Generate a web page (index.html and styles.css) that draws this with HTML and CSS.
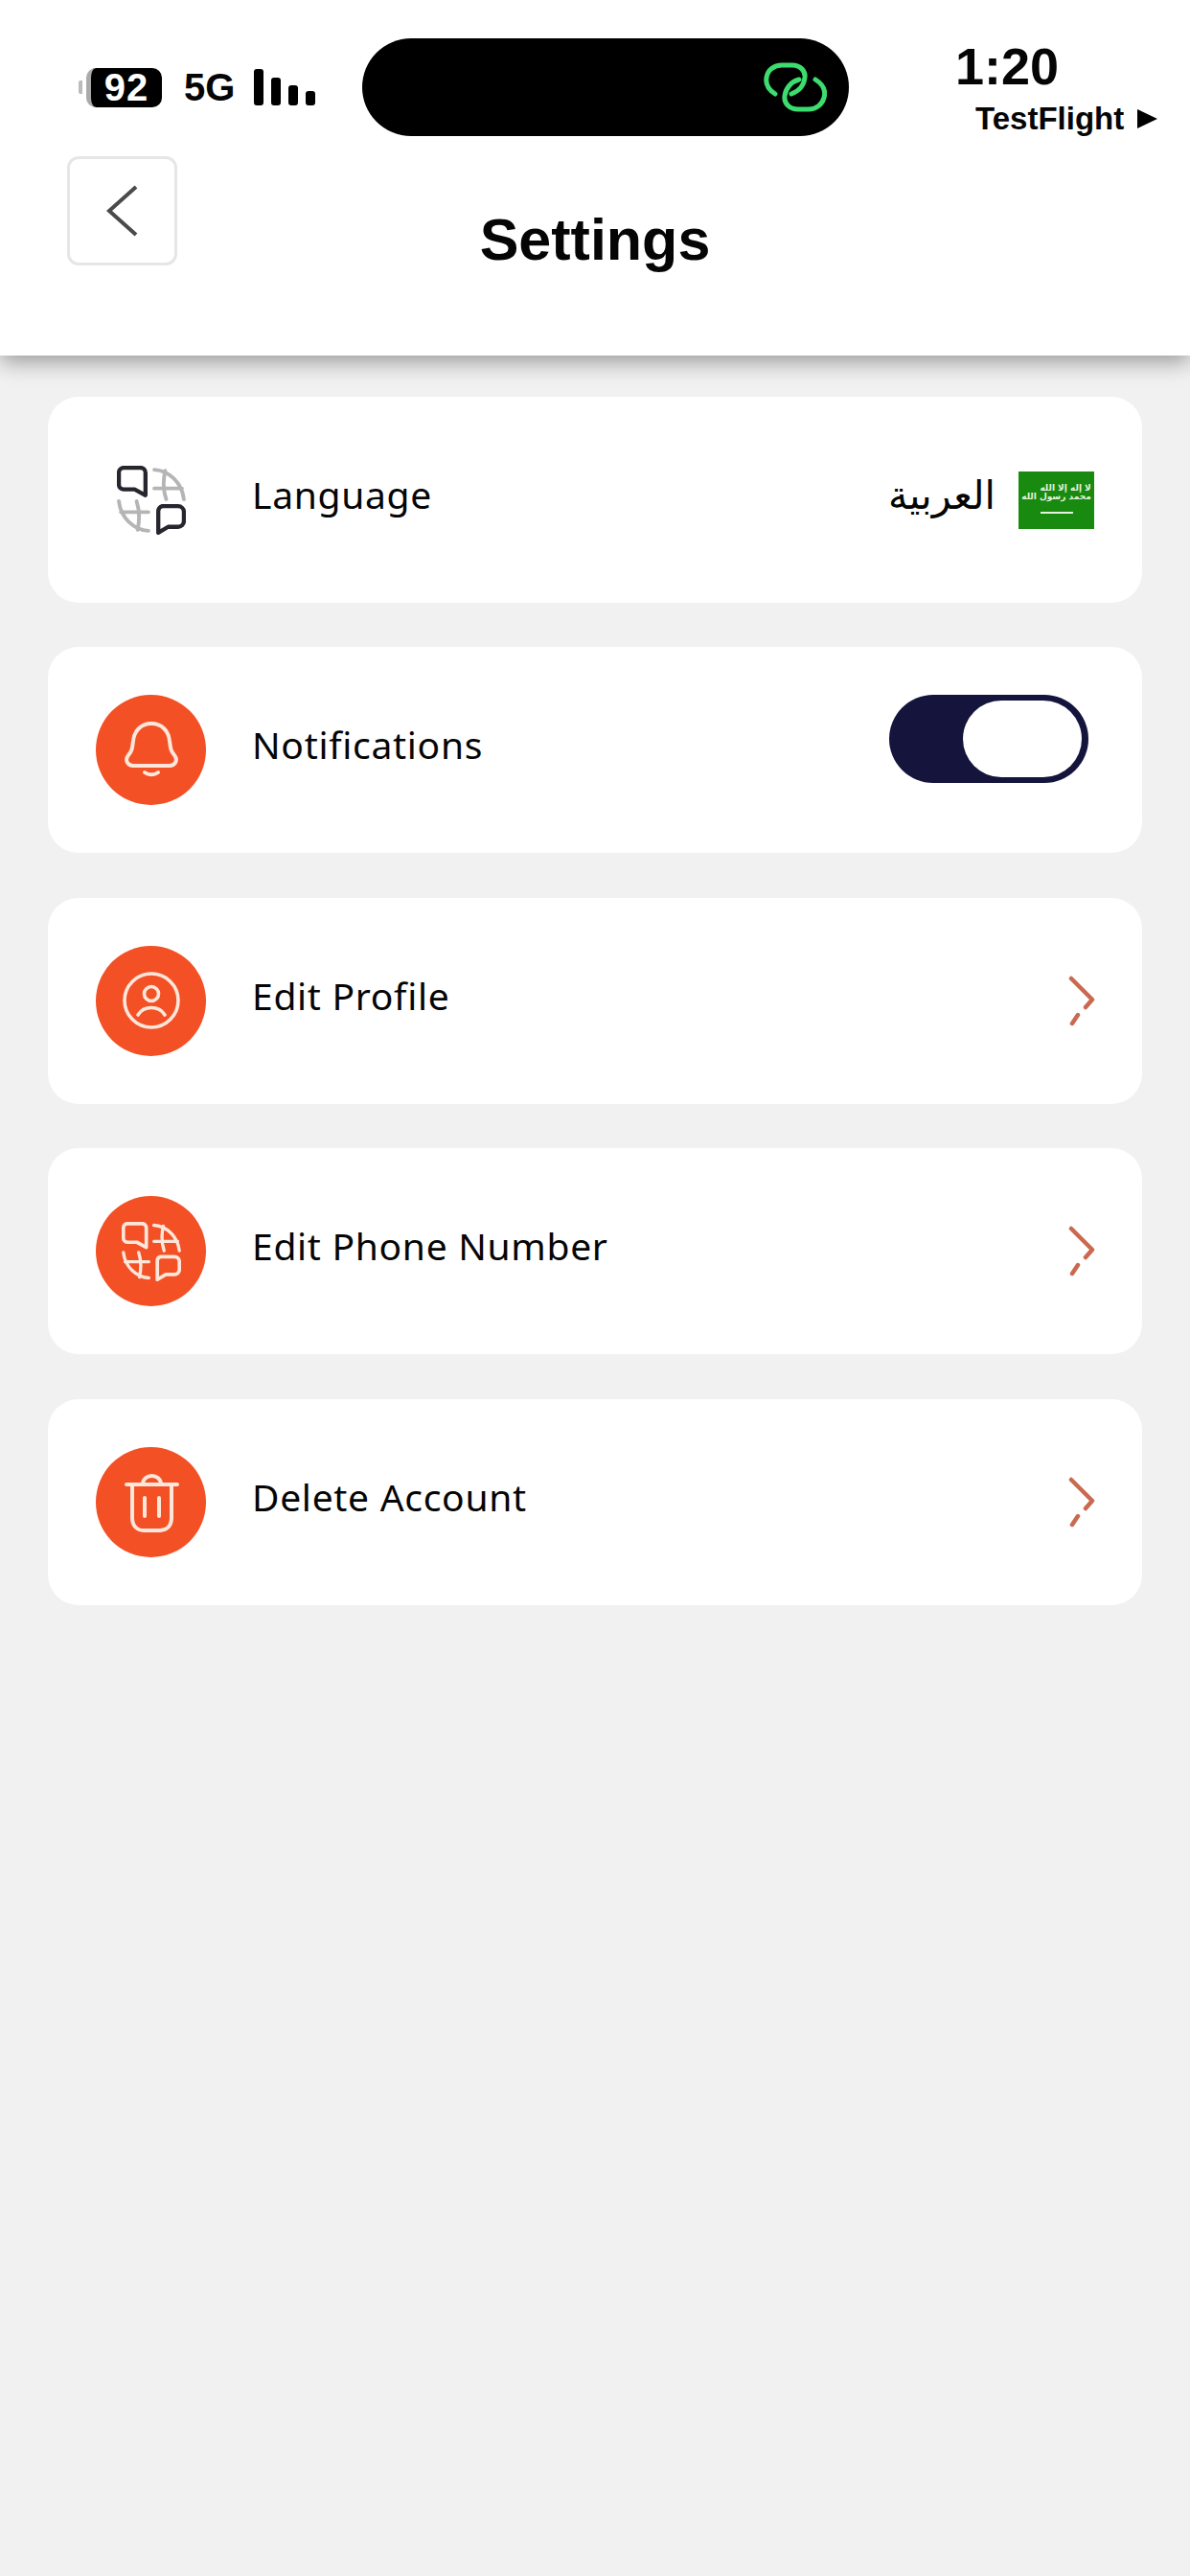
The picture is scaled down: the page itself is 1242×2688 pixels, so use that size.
FILE: index.html
```html
<!DOCTYPE html>
<html lang="en">
	<head>
		<meta charset="utf-8" />
		<title>Settings</title>
		<link rel="stylesheet" href="styles.css">
	</head>
	<body>
		<svg class="settings__defs" width="0" height="0">
			<symbol id="lang-icon" viewBox="0 0 70 70">
				<!-- globe quarters -->
				<g class="globe" fill="none" stroke-width="3.8" stroke-linecap="round">
					<path d="M38 4C53 5 66 17 68 34M38 23H66M49 5C47 14 47 25 50 34" />
					<path d="M32 66C17 65 4 53 2 36M32 47H4M21 65C23 56 23 45 20 36" />
				</g>
				<!-- speech bubbles -->
				<g class="bubbles" fill="none" stroke-width="4.2" stroke-linejoin="round">
					<path d="M7 2H24a5 5 0 0 1 5 5V30L18 24H7a5 5 0 0 1-5-5V7a5 5 0 0 1 5-5z" />
					<path d="M46 41H62a6 6 0 0 1 6 6V56a6 6 0 0 1-6 6H52L42 68V46a5 5 0 0 1 4-5z" />
				</g>
			</symbol>
			<symbol id="chevron" viewBox="0 0 30 56">
				<path d="M3 3L25 25L18 33M10 41L4 50" fill="none" stroke="#c96a50" stroke-width="4.5" stroke-linecap="round" stroke-linejoin="round" />
			</symbol>
		</svg>

		<div class="settings">
			<header class="settings__header">
				<div class="status">
					<div class="status__left">
						<span class="status__nub"></span>
						<span class="status__battery">92</span>
						<span class="status__net">5G</span>
						<span class="status__bars">
							<i class="bar-1"></i><i class="bar-2"></i><i class="bar-3"></i><i class="bar-4"></i>
						</span>
					</div>
					<div class="status__island">
						<svg width="66" height="52" viewBox="0 0 66 52" fill="none" stroke="#3ddc6e" stroke-width="5" stroke-linecap="round">
							<path d="M12 33C4 28 2 22 3 16C4 8 11 3 19 3H30C38 3 44 9 43 16C42 24 37 30 29 33" />
							<path d="M54 18C62 23 65 30 63 37C61 44 55 49 47 49H36C27 49 21 43 22 35C23 27 29 20 37 18" />
						</svg>
					</div>
					<div class="status__right">
						<span class="status__time">1:20</span>
						<span class="status__back">TestFlight <i class="status__play"></i></span>
					</div>
				</div>
				<div class="nav">
					<button class="nav__back">
						<svg width="34" height="54" viewBox="0 0 34 54" fill="none" stroke="#4a4a4a" stroke-width="4">
							<path d="M31 2L3 27L31 52" />
						</svg>
					</button>
					<h1 class="nav__title">Settings</h1>
				</div>
			</header>

			<main class="settings__list">
				<div class="row">
					<span class="row__icon row__icon--plain">
						<svg width="72" height="72"><use href="#lang-icon" /></svg>
					</span>
					<span class="row__label">Language</span>
					<span class="row__value" lang="ar" dir="rtl">العربية</span>
					<span class="flag">
						<span class="flag__script" lang="ar" dir="rtl">لا إله إلا الله<br>محمد رسول الله</span>
						<span class="flag__sword"></span>
					</span>
				</div>

				<div class="row">
					<span class="row__icon">
						<svg width="66" height="66" viewBox="0 0 66 66" fill="none" stroke="#fde6da" stroke-width="4" stroke-linecap="round" stroke-linejoin="round">
							<path d="M33 5C22 5 15 13 14 23C13 31 13 33 9 38C5 43 8 49 14 49H52C58 49 61 43 57 38C53 33 53 31 52 23C51 13 44 5 33 5z" />
							<path d="M26 56C30 59 36 59 40 56" />
						</svg>
					</span>
					<span class="row__label">Notifications</span>
					<span class="toggle"><span class="toggle__knob"></span></span>
				</div>

				<div class="row">
					<span class="row__icon">
						<svg width="66" height="66" viewBox="0 0 66 66" fill="none" stroke="#fde6da" stroke-width="3.6" stroke-linecap="round">
							<circle cx="33" cy="33" r="28" />
							<circle cx="33" cy="26" r="7.5" />
							<path d="M19 48C25 38 41 38 47 48" />
						</svg>
					</span>
					<span class="row__label">Edit Profile</span>
					<svg class="row__chevron" width="30" height="56"><use href="#chevron" /></svg>
				</div>

				<div class="row">
					<span class="row__icon row__icon--light">
						<svg width="62" height="62"><use href="#lang-icon" /></svg>
					</span>
					<span class="row__label">Edit Phone Number</span>
					<svg class="row__chevron" width="30" height="56"><use href="#chevron" /></svg>
				</div>

				<div class="row">
					<span class="row__icon">
						<svg width="66" height="66" viewBox="0 0 66 66" fill="none" stroke="#fde6da" stroke-width="4" stroke-linecap="round" stroke-linejoin="round">
							<path d="M7 15H60" />
							<path d="M24 15C24 3 43 3 43 15" />
							<path d="M13 15V50C13 58 18 63 25 63H42C49 63 54 58 54 50V15" />
							<path d="M26 29V48M41 29V48" />
						</svg>
					</span>
					<span class="row__label">Delete Account</span>
					<svg class="row__chevron" width="30" height="56"><use href="#chevron" /></svg>
				</div>
			</main>
		</div>
	</body>
</html>
```

FILE: styles.css
```css
* {
	box-sizing: border-box;
}

body {
	margin: 0;
	background: #f1f1f1;
	font-family: "Liberation Sans", sans-serif;
	color: #050505;
}

.settings {
	width: 1242px;
	height: 2688px;
	overflow: hidden;
}

.settings__defs {
	display: block;
	height: 0;
}

.settings__header {
	height: 371px;
	background: #fff;
	box-shadow: 0 6px 22px rgba(0, 0, 0, 0.38);
	padding-top: 40px;
}

.settings__list {
	display: flex;
	flex-direction: column;
	gap: 46.4px;
	padding: 43px 50px 0;
}

/* status bar */
.status {
	display: flex;
	align-items: center;
	height: 102px;
	padding-left: 82px;
}

.status__left {
	display: flex;
	align-items: center;
	width: 296px;
}

.status__nub {
	width: 4px;
	height: 14px;
	margin-right: 4px;
	background: #bbb;
	border-radius: 2px 0 0 2px;
}

.status__battery {
	width: 79px;
	height: 41px;
	line-height: 41px;
	text-align: center;
	background: #000;
	border-left: 5px solid #aaa;
	border-radius: 10px;
	color: #fff;
	font-size: 40px;
	font-weight: 700;
	letter-spacing: 1px;
}

.status__net {
	margin-left: 23px;
	font-size: 40px;
	font-weight: 700;
}

.status__bars {
	display: flex;
	align-items: flex-end;
	gap: 8px;
	height: 38px;
	margin-left: 20px;
}

.status__bars i {
	width: 10px;
	background: #000;
	border-radius: 3px;
}

.bar-1 {
	height: 38px;
}
.bar-2 {
	height: 29px;
}
.bar-3 {
	height: 21px;
}
.bar-4 {
	height: 15px;
}

.status__island {
	display: flex;
	align-items: center;
	justify-content: flex-end;
	width: 508px;
	height: 102px;
	padding-right: 23px;
	background: #000;
	border-radius: 51px;
}

.status__right {
	display: flex;
	flex-direction: column;
	margin-left: 111px;
}

.status__time {
	font-size: 54px;
	font-weight: 700;
	line-height: 56px;
}

.status__back {
	display: flex;
	align-items: center;
	gap: 14px;
	margin-left: 21px;
	margin-top: 9px;
	font-size: 33px;
	font-weight: 700;
	line-height: 36px;
}

.status__play {
	width: 0;
	height: 0;
	border-left: 21px solid #000;
	border-top: 10px solid transparent;
	border-bottom: 10px solid transparent;
}

/* nav */
.nav {
	display: grid;
	grid-template-columns: 1fr auto 1fr;
	margin-top: 21px;
	padding: 0 70px;
}

.nav__back {
	display: flex;
	align-items: center;
	justify-content: center;
	width: 115px;
	height: 114px;
	padding: 0;
	background: #fff;
	border: 3px solid #e6e6e6;
	border-radius: 12px;
}

.nav__title {
	margin: 52px 0 0;
	font-size: 61px;
	font-weight: 700;
	line-height: 70px;
}

/* rows */
.row {
	display: flex;
	align-items: center;
	height: 215px;
	padding: 0 50px;
	background: #fff;
	border-radius: 32px;
}

.row__icon {
	display: flex;
	align-items: center;
	justify-content: center;
	flex: none;
	width: 115px;
	height: 115px;
	background: #f35025;
	border-radius: 50%;
}

.row__icon--plain {
	background: none;
	--globe: #b5b5b5;
	--bubble: #26262e;
}

.row__icon--light {
	--globe: #fde6da;
	--bubble: #fde6da;
}

.globe {
	stroke: var(--globe);
}

.bubbles {
	stroke: var(--bubble);
}

.row__label {
	flex: 1;
	margin-left: 48px;
	margin-bottom: 12px;
	font-family: "Noto Sans", sans-serif;
	font-size: 39px;
	letter-spacing: 0.7px;
}

.row__value {
	margin-right: 24px;
	margin-bottom: 10px;
	font-family: "DejaVu Sans", sans-serif;
	font-size: 41px;
}

.row__chevron {
	flex: none;
	margin-top: 3px;
	margin-right: -3px;
}

.flag {
	display: flex;
	flex-direction: column;
	align-items: center;
	width: 79px;
	height: 60px;
	padding-top: 13px;
	background: #188a10;
}

.flag__script {
	color: #e4f2de;
	font-family: "DejaVu Sans", sans-serif;
	font-size: 9px;
	font-weight: 700;
	line-height: 9px;
	white-space: nowrap;
}

.flag__sword {
	width: 34px;
	height: 2px;
	margin-top: 11px;
	background: #e4f2de;
}

.toggle {
	display: flex;
	align-items: center;
	justify-content: flex-end;
	width: 208px;
	height: 92px;
	margin-right: 6px;
	margin-bottom: 24px;
	padding-right: 7px;
	background: #14143c;
	border-radius: 46px;
}

.toggle__knob {
	width: 124px;
	height: 80px;
	background: #fff;
	border-radius: 40px;
}
```
